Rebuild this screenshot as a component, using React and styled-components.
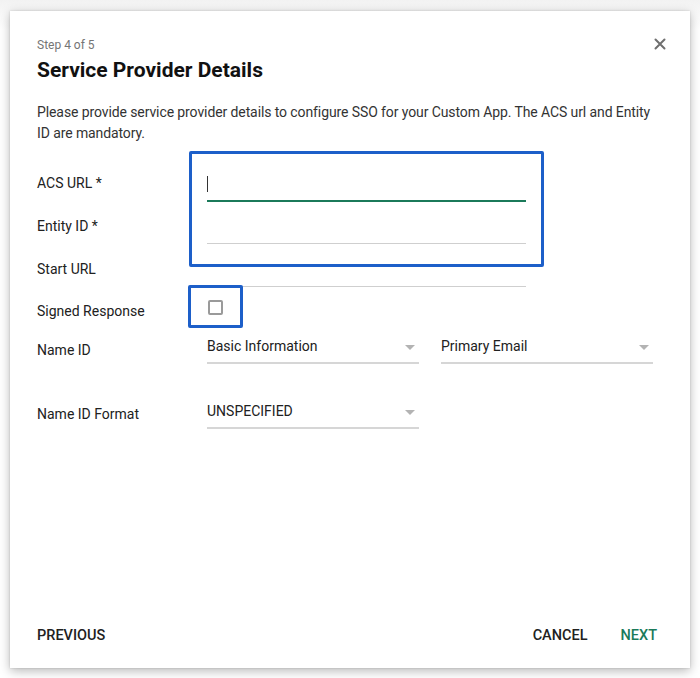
import React from 'react';
import styled, { createGlobalStyle } from 'styled-components';

const GlobalStyle = createGlobalStyle`
  html, body {
    margin: 0;
    padding: 0;
    background: #fff;
  }
  body {
    font-family: Roboto, "Liberation Sans", Arial, sans-serif;
    -webkit-font-smoothing: antialiased;
  }
`;

export default function App() {
  return (
    <>
      <GlobalStyle />
      <PageSC>
        <DialogSC>
          <HeaderSC>
            <div>
              <StepSC>Step 4 of 5</StepSC>
              <TitleSC>Service Provider Details</TitleSC>
            </div>
            <CloseSC aria-label="close">
              <svg width="12" height="12" viewBox="0 0 12 12">
                <path d="M1.5 1.5L10.5 10.5M10.5 1.5L1.5 10.5" stroke="#6f6f6f" strokeWidth="2" strokeLinecap="round" />
              </svg>
            </CloseSC>
          </HeaderSC>

          <DescriptionSC>
            Please provide service provider details to configure SSO for your Custom App. The ACS url and Entity ID are mandatory.
          </DescriptionSC>

          <FormSC>
            <FieldRowSC>
              <LabelSC>ACS URL *</LabelSC>
              <TextFieldSC focused>
                <CaretSC />
              </TextFieldSC>
            </FieldRowSC>
            <FieldRowSC>
              <LabelSC>Entity ID *</LabelSC>
              <TextFieldSC />
            </FieldRowSC>
            <FieldRowSC>
              <LabelSC>Start URL</LabelSC>
              <TextFieldSC />
            </FieldRowSC>

            <CheckRowSC>
              <LabelSC offset={4} bottom={0}>Signed Response</LabelSC>
              <CheckboxSC />
            </CheckRowSC>

            <SelectRowSC height={34}>
              <LabelSC bottom={4}>Name ID</LabelSC>
              <SelectGroupSC>
                <SelectSC>
                  <span>Basic Information</span>
                  <ArrowSC />
                </SelectSC>
                <SelectSC>
                  <span>Primary Email</span>
                  <ArrowSC />
                </SelectSC>
              </SelectGroupSC>
            </SelectRowSC>

            <SelectRowSC height={65}>
              <LabelSC bottom={5}>Name ID Format</LabelSC>
              <SelectGroupSC>
                <SelectSC>
                  <span>UNSPECIFIED</span>
                  <ArrowSC />
                </SelectSC>
              </SelectGroupSC>
            </SelectRowSC>

            <HighlightSC style={{ left: 152, top: -8, width: 355, height: 116 }} />
            <HighlightSC style={{ left: 151, top: 126, width: 55, height: 43 }} />
          </FormSC>

          <FooterSC>
            <ActionSC>Previous</ActionSC>
            <ActionGroupSC>
              <ActionSC>Cancel</ActionSC>
              <ActionSC primary>Next</ActionSC>
            </ActionGroupSC>
          </FooterSC>
        </DialogSC>
      </PageSC>
    </>
  );
}

const PageSC = styled.div`
  width: 700px;
  height: 678px;
  box-sizing: border-box;
  padding: 11px 10px 10px 10px;
  background: linear-gradient(#f2f2f2, #fff 30px);
  overflow: hidden;
`;

const DialogSC = styled.div`
  width: 680px;
  height: 657px;
  box-sizing: border-box;
  background: #fff;
  box-shadow: 0 3px 10px rgba(0, 0, 0, 0.28), 0 0 2px rgba(0, 0, 0, 0.15);
  padding: 26px 33px 22px 27px;
  display: flex;
  flex-direction: column;
  color: #212121;
`;

const HeaderSC = styled.div`
  display: flex;
  justify-content: space-between;
  align-items: flex-start;
`;

const StepSC = styled.div`
  font-size: 12px;
  line-height: 16px;
  color: #757575;
`;

const TitleSC = styled.h1`
  margin: 4px 0 0;
  font-size: 21px;
  line-height: 26px;
  font-weight: 700;
  color: #111;
`;

const CloseSC = styled.button`
  border: none;
  background: none;
  padding: 0;
  margin: 1px -9px 0 0;
  width: 12px;
  height: 12px;
  display: flex;
  cursor: pointer;
`;

const DescriptionSC = styled.p`
  margin: 19px 0 0;
  font-size: 14px;
  line-height: 21px;
  letter-spacing: -0.1px;
  color: #333;
`;

const FormSC = styled.div`
  position: relative;
  margin-top: 15px;
  display: flex;
  flex-direction: column;
`;

const FieldRowSC = styled.div`
  display: grid;
  grid-template-columns: 170px 319px;
  align-items: end;
  height: 43px;
`;

const LabelSC = styled.div`
  font-size: 14px;
  line-height: 20px;
  color: #212121;
  padding-bottom: ${(p) => (p.bottom != null ? p.bottom : 9)}px;
  padding-top: ${(p) => p.offset || 0}px;
  white-space: nowrap;
`;

const TextFieldSC = styled.div`
  box-sizing: border-box;
  height: 30px;
  display: flex;
  align-items: center;
  border-bottom: ${(p) => (p.focused ? '2px solid #1b7a5a' : '1px solid #cfcfcf')};
  margin-bottom: ${(p) => (p.focused ? 0 : 1)}px;
  padding-bottom: 4px;
`;

const CaretSC = styled.span`
  display: block;
  width: 1px;
  height: 16px;
  background: #333;
`;

const CheckRowSC = styled.div`
  display: grid;
  grid-template-columns: 170px auto;
  align-items: center;
  height: 42px;
`;

const CheckboxSC = styled.span`
  display: block;
  box-sizing: border-box;
  width: 15px;
  height: 15px;
  margin: 0 0 4px 1px;
  border: 2px solid #9a9a9a;
  border-radius: 2px;
`;

const SelectRowSC = styled.div`
  display: grid;
  grid-template-columns: 170px auto;
  align-items: end;
  height: ${(p) => p.height}px;
`;

const SelectGroupSC = styled.div`
  display: flex;
  gap: 22px;
`;

const SelectSC = styled.div`
  box-sizing: border-box;
  width: 212px;
  height: 30px;
  display: flex;
  align-items: center;
  justify-content: space-between;
  padding: 0 4px 4px 0;
  border-bottom: 2px solid #d6d6d6;
  font-size: 14px;
  color: #212121;
`;

const ArrowSC = styled.span`
  width: 0;
  height: 0;
  border-left: 5px solid transparent;
  border-right: 5px solid transparent;
  border-top: 5px solid #b3b3b3;
  margin-top: 2px;
`;

const HighlightSC = styled.div`
  position: absolute;
  box-sizing: border-box;
  border: 3px solid #1d5fc9;
  border-radius: 2px;
  pointer-events: none;
`;

const FooterSC = styled.div`
  margin-top: auto;
  display: flex;
  justify-content: space-between;
  align-items: center;
`;

const ActionGroupSC = styled.div`
  display: flex;
  gap: 33px;
`;

const ActionSC = styled.button`
  border: none;
  background: none;
  padding: 0;
  font-family: inherit;
  font-size: 14.5px;
  line-height: 20px;
  font-weight: 500;
  text-transform: uppercase;
  color: ${(p) => (p.primary ? '#1b7a5a' : '#212121')};
  cursor: pointer;
`;
